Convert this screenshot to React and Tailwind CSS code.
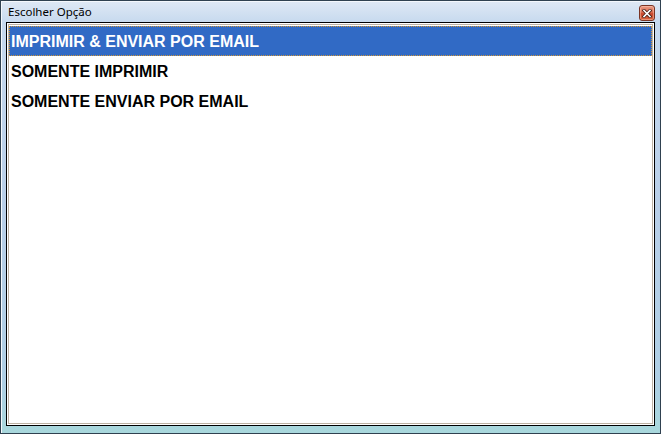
export default function App() {
  const rows = ["IMPRIMIR & ENVIAR POR EMAIL", "SOMENTE IMPRIMIR", "SOMENTE ENVIAR POR EMAIL"];
  return (
    <div className="w-[661px] h-[434px] border border-[#2f4150] bg-[linear-gradient(to_bottom,#dfe9f5_0px,#c6d9ee_22px,#b9cfe8_200px,#afcfe4_380px,#a8d8dc_434px)] flex flex-col px-[5px] pb-[7px] shadow-[inset_1px_1px_0_#f4f8fc]">
      <div className="h-[21px] flex items-start justify-between shrink-0">
        <span className="pl-[2px] pt-[4px] text-[11.5px] leading-[14px] text-black" style={{ fontFamily: '"Noto Sans", "DejaVu Sans", sans-serif' }}>
          Escolher Opção
        </span>
        <div className="mt-[4px] w-[16px] h-[16px] rounded-[3px] border border-[#7a3424] bg-[linear-gradient(to_bottom,#eb9c86_0%,#dc6e52_45%,#c9472c_55%,#d8653f_100%)] flex items-center justify-center shadow-[inset_0_0_0_1px_rgba(255,210,190,0.45)]">
          <svg width="10" height="9" viewBox="0 0 10 9">
            <path d="M2 1.5 L8 7.5 M8 1.5 L2 7.5" stroke="#4a2218" strokeWidth="3.2" strokeLinecap="square" />
            <path d="M2 1.5 L8 7.5 M8 1.5 L2 7.5" stroke="#ffffff" strokeWidth="1.6" strokeLinecap="square" />
          </svg>
        </div>
      </div>
      <div className="flex-1 flex border border-black bg-white p-px">
        <div className="flex-1 border border-[#bdb2a4] bg-white pt-px flex flex-col">
          {rows.map((r, i) =>
            i === 0 ? (
              <div key={r} className="h-[30px] flex items-center pl-px pt-[2px] border border-dotted border-[#ce953a] bg-[#316ac5] text-white text-[16px] font-bold whitespace-nowrap" style={{ fontFamily: '"Liberation Sans", Arial, sans-serif' }}>
                {r}
              </div>
            ) : (
              <div key={r} className="h-[30px] flex items-center pl-[2px] pt-[2px] text-black text-[16px] font-bold whitespace-nowrap" style={{ fontFamily: '"Liberation Sans", Arial, sans-serif' }}>
                {r}
              </div>
            )
          )}
        </div>
      </div>
    </div>
  );
}
